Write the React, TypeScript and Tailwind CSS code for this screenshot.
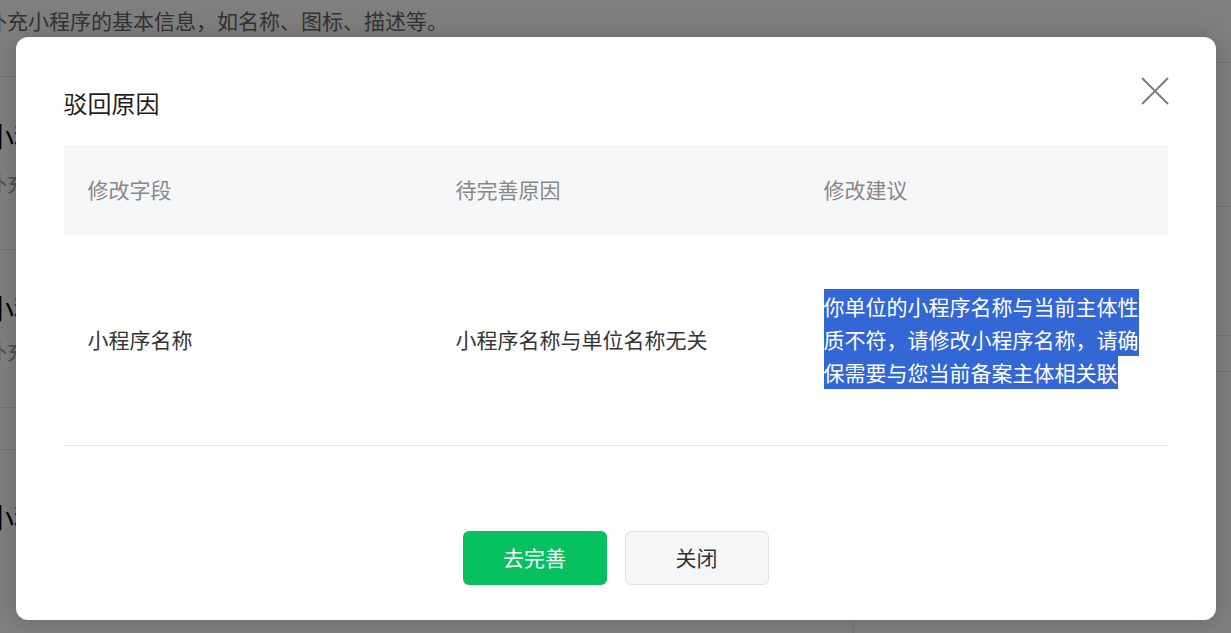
import React from "react";

const font = { fontFamily: '"Noto Sans CJK SC", "Noto Sans", sans-serif' };

function CloseIcon() {
  return (
    <svg width="28" height="28" viewBox="0 0 28 28" fill="none">
      <path d="M1 1L27 27M27 1L1 27" stroke="#7f7f7f" strokeWidth="2" />
    </svg>
  );
}

export default function App() {
  return (
    <div
      className="relative w-[1231px] h-[633px] overflow-hidden bg-white"
      style={font}
    >
      {/* underlying page */}
      <div className="flex h-full">
        <div className="w-[853px] flex flex-col">
          <div className="h-[77px] border-b border-[#e5e5e5] text-[21px] leading-[40px] text-[#666] ml-[-14px]">
            补充小程序的基本信息，如名称、图标、描述等。
          </div>
          <div className="h-[173px] border-b border-[#e5e5e5] pt-[39px] ml-[-14px]">
            <div className="text-[28px] leading-[40px] text-black">小程序名称</div>
            <div className="text-[21px] leading-[32px] text-[#999] mt-[10px]">补充小程序的名称</div>
          </div>
          <div className="h-[158px] border-b border-[#e5e5e5] pt-[38px] ml-[-14px]">
            <div className="text-[28px] leading-[40px] text-black">小程序图标</div>
            <div className="text-[21px] leading-[32px] text-[#999] mt-[6px]">补充小程序的图标</div>
          </div>
          <div className="h-[42px] border-b border-[#e5e5e5]" />
          <div className="pt-[47px] ml-[-14px]">
            <div className="text-[28px] leading-[40px] text-black">小程序描述</div>
          </div>
        </div>
        <div className="flex-1 flex flex-col">
          <div className="h-[63px] border-b border-[#e5e5e5]" />
          <div className="h-[144px] border-b border-[#e5e5e5]" />
          <div className="h-[129px] border-b border-[#e5e5e5]" />
          <div className="h-[36px] border-b border-[#e5e5e5]" />
          <div className="flex-1 border-l border-[#e5e5e5]" />
        </div>
      </div>

      {/* overlay */}
      <div className="absolute inset-0 bg-black/50 flex justify-center pt-[37px]">
        <div className="relative w-[1200px] h-[583px] bg-white rounded-[12px] px-[48px] pt-[48px] flex flex-col shadow-[0_0_24px_rgba(0,0,0,0.18)]">
          <button className="absolute right-[47px] top-[40px] w-[28px] h-[28px]">
            <CloseIcon />
          </button>
          <div className="text-[24px] leading-[36px] text-[#1f1f1f]">驳回原因</div>
          <div className="mt-[24px]">
            <div className="grid grid-cols-3 h-[90px] bg-[#f6f7f9] items-center text-[21px] text-[#888]">
              <div className="pl-[24px]">修改字段</div>
              <div className="pl-[24px]">待完善原因</div>
              <div className="pl-[24px]">修改建议</div>
            </div>
            <div className="grid grid-cols-3 h-[211px] border-b border-[#e7e7e7] items-center text-[21px] text-[#353535]">
              <div className="pl-[24px]">小程序名称</div>
              <div className="pl-[24px]">小程序名称与单位名称无关</div>
              <div className="px-[24px] leading-[33px] pb-[2px]">
                <span className="bg-[#3367d6] text-white py-[2px]">
                  你单位的小程序名称与当前主体性质不符，请修改小程序名称，请确保需要与您当前备案主体相关联
                </span>
              </div>
            </div>
          </div>
          <div className="flex justify-center gap-[18px] mt-[85px]">
            <button className="w-[144px] h-[54px] rounded-[6px] bg-[#07c160] text-white text-[21px]">
              去完善
            </button>
            <button className="w-[144px] h-[54px] rounded-[6px] bg-[#f5f6f8] border border-[#e1e2e5] text-[#333] text-[21px]">
              关闭
            </button>
          </div>
        </div>
      </div>
    </div>
  );
}
